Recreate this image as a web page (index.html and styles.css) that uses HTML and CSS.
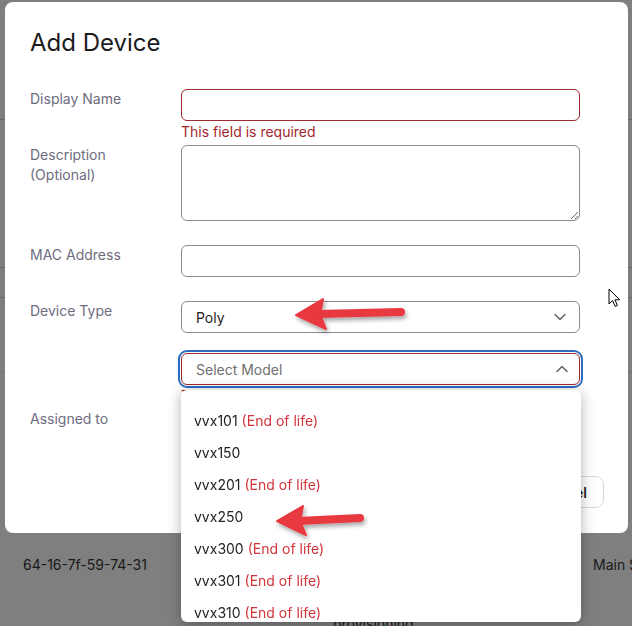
FILE: index.html
```html
<!DOCTYPE html>
<html lang="en">
<head>
<meta charset="utf-8">
<title>Add Device</title>
<link rel="stylesheet" href="styles.css">
</head>
<body>
  <div class="page">
    <div class="bg-row bg-r1"></div>
    <div class="bg-row bg-r2"></div>
    <div class="bg-row bg-r3"></div>
    <div class="bg-row bg-r4"></div>
    <div class="bg-data">
      <div class="bg-cell c1">64-16-7f-59-74-31</div>
      <div class="bg-cell c2"><span class="bg-prov">provisioning</span></div>
      <div class="bg-cell c3">Main Street</div>
    </div>
  </div>

  <div class="overlay"></div>

  <div class="modal">
    <h2 class="title">Add Device</h2>
    <div class="form">
      <div class="row">
        <div class="label">Display Name</div>
        <div class="field">
          <input class="input input-error" type="text">
          <div class="error">This field is required</div>
        </div>
      </div>
      <div class="row">
        <div class="label">Description<br>(Optional)</div>
        <div class="field">
          <textarea class="textarea"></textarea>
        </div>
      </div>
      <div class="row">
        <div class="label">MAC Address</div>
        <div class="field">
          <input class="input" type="text">
        </div>
      </div>
      <div class="row">
        <div class="label">Device Type</div>
        <div class="field stack">
          <div class="select">
            <span class="select-value">Poly</span>
            <svg class="chev" width="12" height="8" viewBox="0 0 12 8"><path d="M1 1.5 L6 6.5 L11 1.5" fill="none" stroke="#5c5c5c" stroke-width="1.4" stroke-linecap="round" stroke-linejoin="round"/></svg>
          </div>
          <div class="model-wrap">
            <div class="select select-focus">
              <span class="select-placeholder">Select Model</span>
              <svg class="chev chev-up" width="12" height="8" viewBox="0 0 12 8"><path d="M1 6.5 L6 1.5 L11 6.5" fill="none" stroke="#5c5c5c" stroke-width="1.4" stroke-linecap="round" stroke-linejoin="round"/></svg>
            </div>
            <div class="error">This field is required</div>
            <div class="dropdown">
              <div class="opt">vvx101 <span class="eol">(End of life)</span></div>
              <div class="opt">vvx150</div>
              <div class="opt">vvx201 <span class="eol">(End of life)</span></div>
              <div class="opt">vvx250</div>
              <div class="opt">vvx300 <span class="eol">(End of life)</span></div>
              <div class="opt">vvx301 <span class="eol">(End of life)</span></div>
              <div class="opt">vvx310 <span class="eol">(End of life)</span></div>
              <div class="opt">vvx311 <span class="eol">(End of life)</span></div>
            </div>
          </div>
        </div>
      </div>
      <div class="row">
        <div class="label">Assigned to</div>
        <div class="field">
          <input class="input" type="text">
        </div>
      </div>
    </div>
    <div class="footer">
      <button class="btn">Cancel</button>
    </div>
  </div>

  <svg class="annot" width="632" height="626" viewBox="0 0 632 626">
    <defs>
      <filter id="sh" x="-20%" y="-50%" width="140%" height="200%">
        <feDropShadow dx="1.5" dy="3" stdDeviation="2" flood-color="#000" flood-opacity="0.35"/>
      </filter>
    </defs>
    <g filter="url(#sh)" fill="#e8393f" stroke="#e8393f">
      <line x1="318" y1="314" x2="401" y2="312" stroke-width="8" stroke-linecap="round"/>
      <path d="M296 315 L323 299 L320 314 L326 329 Z" stroke-width="2" stroke-linejoin="round"/>
      <line x1="298" y1="521" x2="360" y2="518" stroke-width="8" stroke-linecap="round"/>
      <path d="M277 521 L303 506 L300 521 L306 535 Z" stroke-width="2" stroke-linejoin="round"/>
    </g>
  </svg>

  <svg class="cursor" width="14" height="20" viewBox="0 0 14 20">
    <path d="M1 1 L1 16 L4.6 12.6 L7.2 18.4 L9.4 17.4 L6.9 11.8 L11.6 11.8 Z" fill="#fff" stroke="#000" stroke-width="1" stroke-linejoin="round"/>
  </svg>
</body>
</html>
```

FILE: styles.css
```css
* { box-sizing: border-box; }

html, body {
  margin: 0;
  width: 632px;
  height: 626px;
  overflow: hidden;
  background: #fff;
  font-family: "Inter", "Liberation Sans", sans-serif;
  font-size: 14px;
}

/* background page (under overlay) */
.page {
  width: 632px;
  height: 626px;
}
.bg-row { border-bottom: 1px solid #cfcfcf; }
.bg-r1 { height: 120px; }
.bg-r2 { height: 148px; }
.bg-r3 { height: 30px; }
.bg-r4 { height: 75px; border-bottom-color: #e6e6e6; }
.bg-data {
  display: grid;
  grid-template-columns: 310px 260px 1fr;
  padding-left: 23px;
  padding-top: 182px;
  color: #353535;
  line-height: 20px;
  white-space: nowrap;
}
.bg-prov {
  display: block;
  margin-top: 59px;
}

.overlay {
  position: fixed;
  inset: 0;
  background: rgba(0, 0, 0, 0.5);
}

/* modal */
.modal {
  position: absolute;
  left: 5px;
  top: 2px;
  width: 623px;
  height: 531px;
  background: #fff;
  border-radius: 8px;
  padding: 26px 24px 25px 25px;
  display: flex;
  flex-direction: column;
}

.title {
  margin: 0;
  font-size: 24px;
  line-height: 29px;
  font-weight: 400;
  color: #1c1c1c;
}

.form { margin-top: 32px; }

.row {
  display: grid;
  grid-template-columns: 151px 399px;
  margin-bottom: 24px;
}

.label {
  color: #6d6c7e;
  line-height: 20px;
}

.field { display: flex; flex-direction: column; }
.stack { gap: 20px; }

.input {
  width: 100%;
  height: 32px;
  border: 1px solid #8b8b8b;
  border-radius: 6px;
  padding: 0 13px;
  font: inherit;
  background: #fff;
  outline: none;
}
.input-error { border-color: #9c2c32; }

.textarea {
  width: 100%;
  height: 76px;
  border: 1px solid #8b8b8b;
  border-radius: 6px;
  padding: 8px 13px;
  font: inherit;
  resize: vertical;
  display: block;
  outline: none;
}

.error {
  color: #a3262d;
  line-height: 20px;
  margin-top: 1px;
  margin-bottom: -21px;
}

.select {
  height: 32px;
  border: 1px solid #8b8b8b;
  border-radius: 6px;
  padding: 0 13px 0 14px;
  display: flex;
  align-items: center;
  justify-content: space-between;
  background: #fff;
}
.select-value { color: #1e1e1e; }
.select-placeholder { color: #707070; }
.select-focus {
  border-color: #9c2c32;
  outline: 2px solid #2c6dc4;
  outline-offset: 1px;
}
.chev { display: block; }
.chev-up { margin-right: -2px; }

.model-wrap { position: relative; }

.dropdown {
  position: absolute;
  left: 0;
  top: 37px;
  width: 400px;
  height: 232px;
  background: #fff;
  border-radius: 6px;
  box-shadow: 0 2px 14px rgba(0, 0, 0, 0.3);
  padding-top: 14px;
  overflow: hidden;
  z-index: 5;
}
.opt {
  height: 32px;
  display: flex;
  align-items: center;
  gap: 4px;
  padding-left: 13px;
  color: #232323;
  white-space: nowrap;
}
.eol { color: #d2343b; }

.footer {
  margin-top: auto;
  display: flex;
  justify-content: flex-end;
}
.btn {
  height: 32px;
  padding: 0 16px;
  border: 1px solid #d8d8d8;
  border-radius: 8px;
  background: #fff;
  font: inherit;
  font-weight: 600;
  color: #1e1e1e;
}

.annot {
  position: absolute;
  left: 0;
  top: 0;
  pointer-events: none;
  z-index: 10;
}

.cursor {
  position: absolute;
  left: 608px;
  top: 288px;
  z-index: 11;
}
```
